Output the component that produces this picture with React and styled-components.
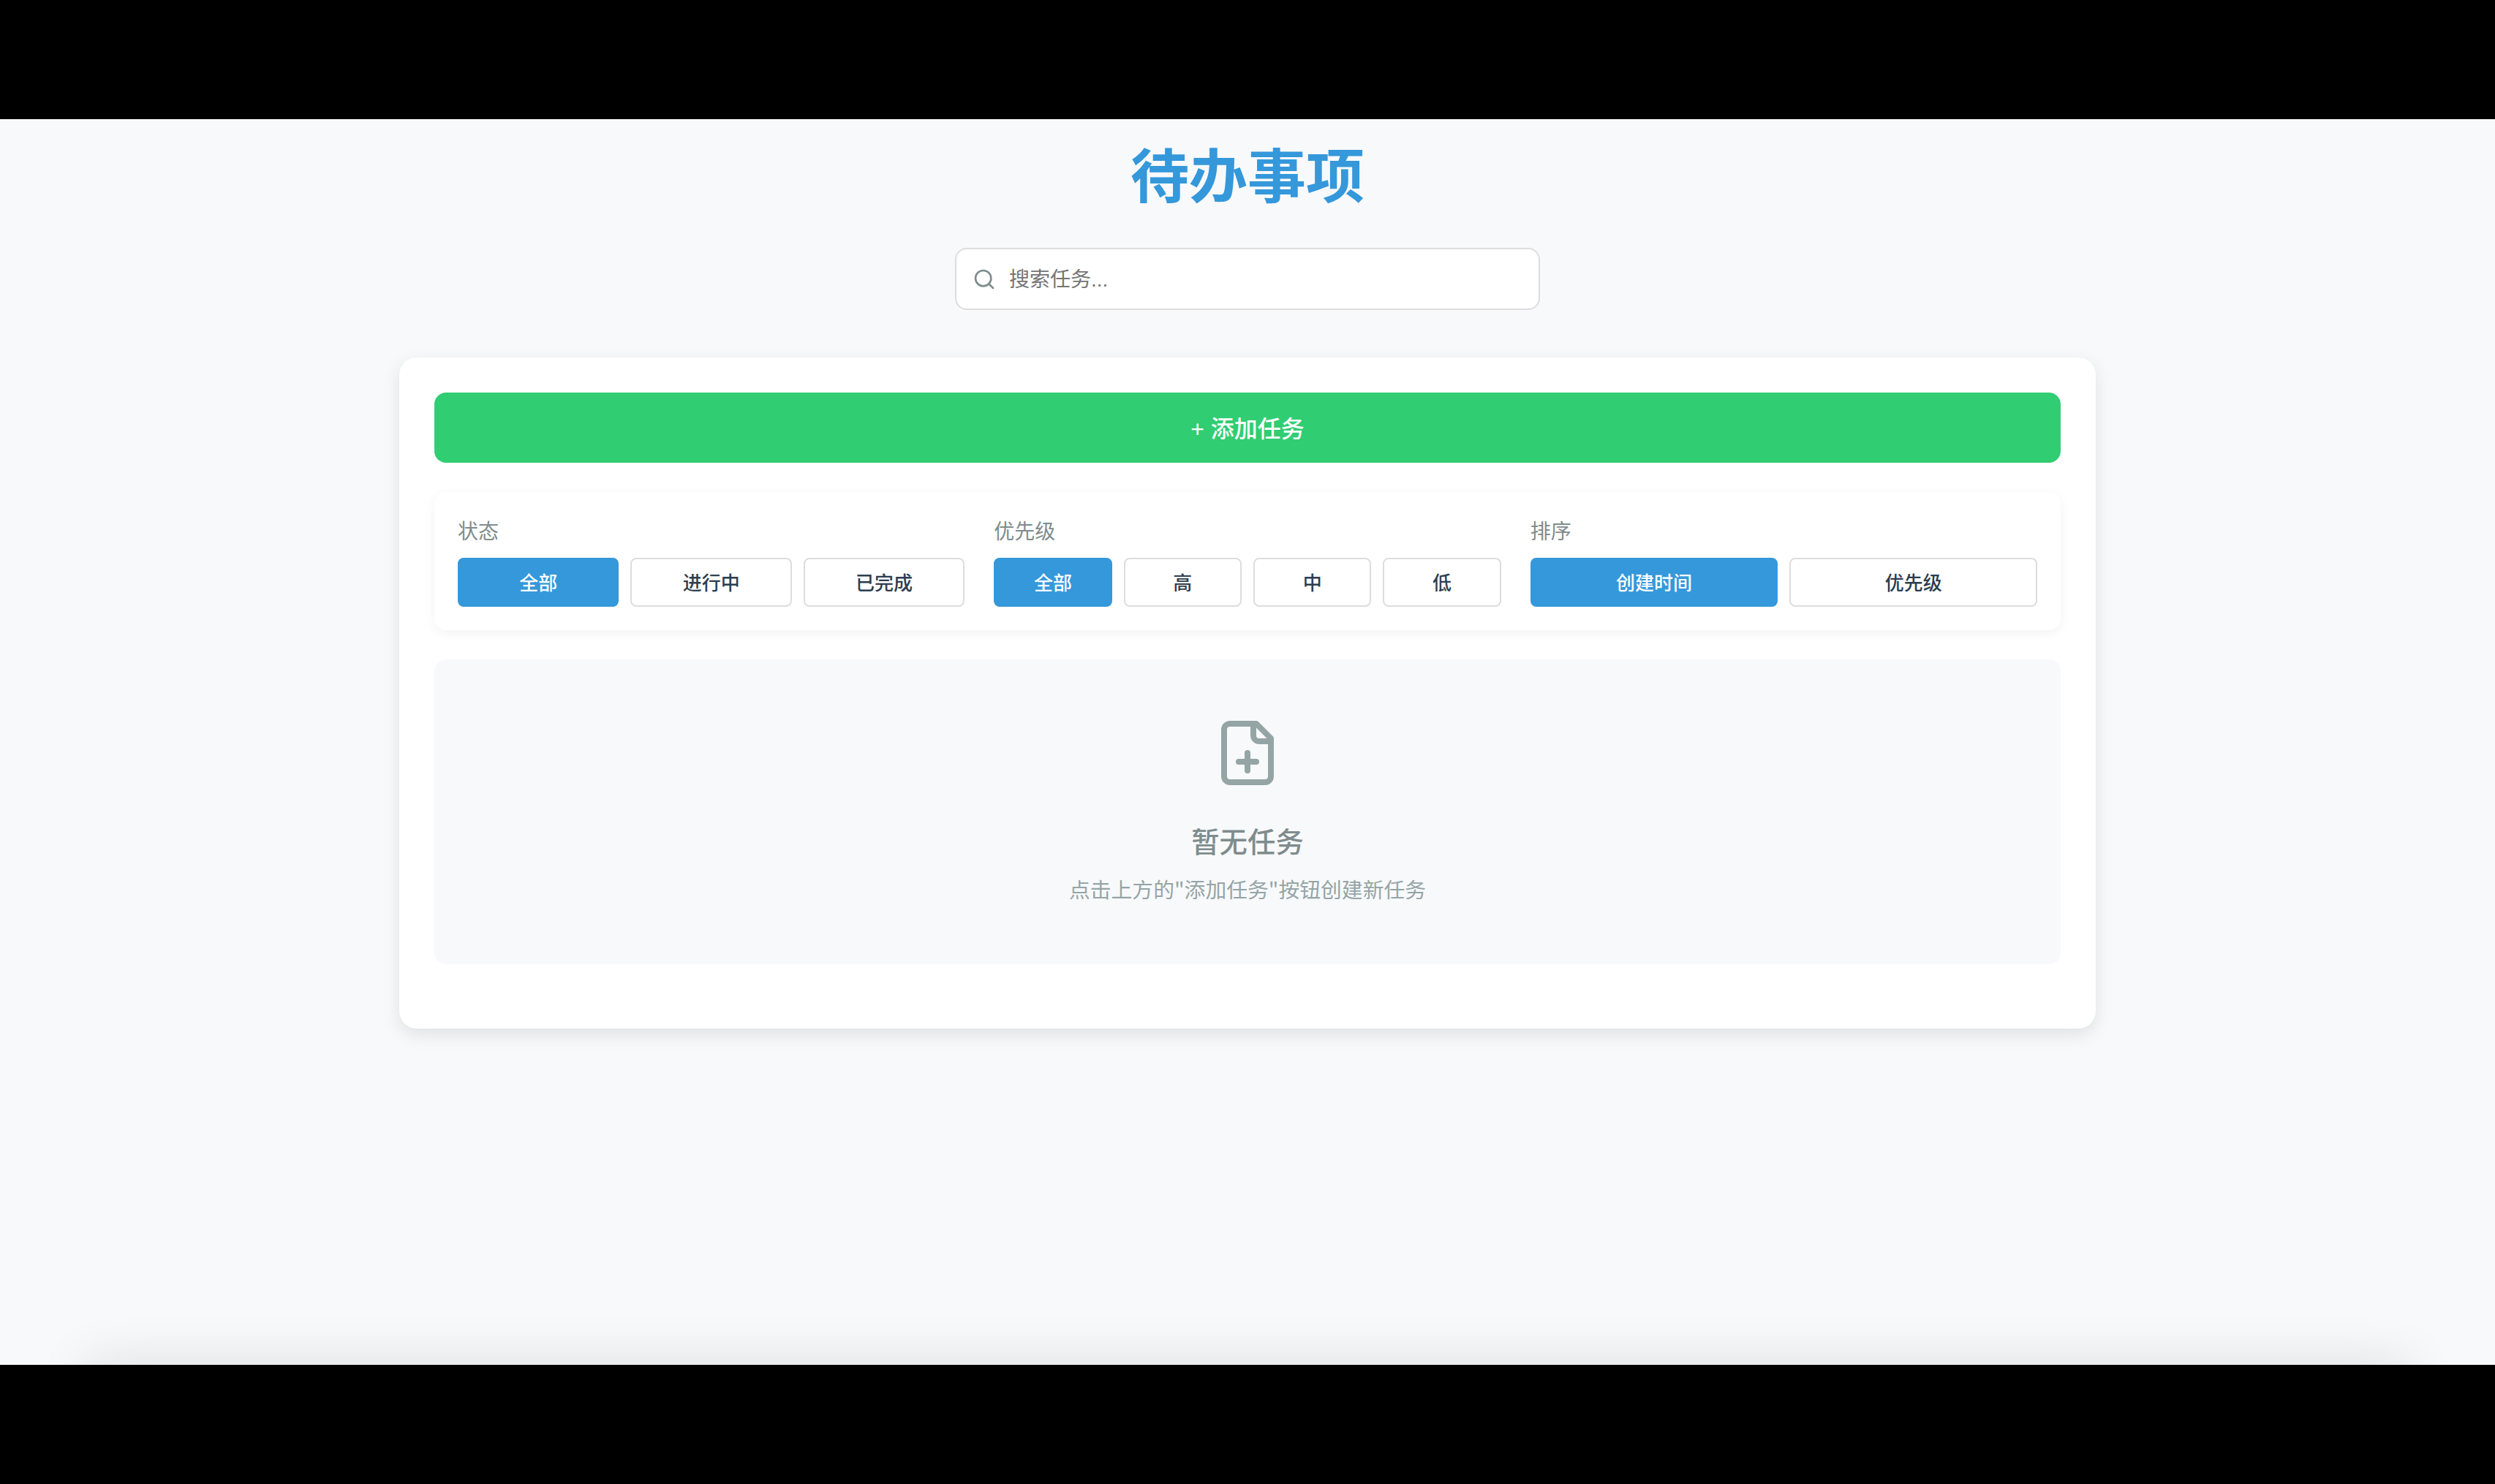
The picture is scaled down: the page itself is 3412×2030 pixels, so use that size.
import React from "react";
import styled, { createGlobalStyle } from "styled-components";

const FONT = `"Liberation Sans", "Noto Sans CJK SC", sans-serif`;

const FILTER_GROUPS = [
  { label: "状态", options: ["全部", "进行中", "已完成"] },
  { label: "优先级", options: ["全部", "高", "中", "低"] },
  { label: "排序", options: ["创建时间", "优先级"] },
];

function App() {
  return (
    <Page>
      <GlobalStyle />
      <BlackBar />
      <Main>
        <Container>
          <Title>待办事项</Title>
          <SearchBox>
            <SearchIcon viewBox="0 0 24 24">
              <path d="m21 21-4.34-4.34" />
              <circle cx="11" cy="11" r="8" />
            </SearchIcon>
            <SearchInput placeholder="搜索任务..." />
          </SearchBox>

          <Card>
            <AddButton type="button">+ 添加任务</AddButton>

            <FilterPanel>
              {FILTER_GROUPS.map((group) => (
                <FilterGroup key={group.label}>
                  <FilterLabel>{group.label}</FilterLabel>
                  <FilterOptions>
                    {group.options.map((option, index) => (
                      <FilterButton key={option} type="button" $active={index === 0}>
                        {option}
                      </FilterButton>
                    ))}
                  </FilterOptions>
                </FilterGroup>
              ))}
            </FilterPanel>

            <EmptyState>
              <EmptyIcon viewBox="0 0 24 24">
                <path d="M15 2H6a2 2 0 0 0-2 2v16a2 2 0 0 0 2 2h12a2 2 0 0 0 2-2V7Z" />
                <path d="M14 2v4a2 2 0 0 0 2 2h4" />
                <path d="M9 15h6" />
                <path d="M12 18v-6" />
              </EmptyIcon>
              <EmptyTitle>暂无任务</EmptyTitle>
              <EmptyText>点击上方的"添加任务"按钮创建新任务</EmptyText>
            </EmptyState>
          </Card>
        </Container>
        <FooterShadow />
      </Main>
      <BlackBar />
    </Page>
  );
}

const GlobalStyle = createGlobalStyle`
  * {
    box-sizing: border-box;
  }

  html,
  body {
    margin: 0;
    padding: 0;
    background: #000;
    font-family: ${FONT};
  }
`;

const Page = styled.div`
  display: flex;
  flex-direction: column;
  height: 2030px;
  overflow: hidden;
`;

const BlackBar = styled.div`
  flex: 0 0 163px;
  background: #000;
`;

const Main = styled.main`
  position: relative;
  flex: 0 0 1704px;
  overflow: hidden;
  background: #f8f9fb;
`;

const Container = styled.div`
  display: flex;
  flex-direction: column;
  align-items: center;
  width: 2320px;
  margin: 0 auto;
  padding-top: 32px;
`;

const Title = styled.h1`
  margin: 0 0 48px;
  color: #3498db;
  font-size: 80px;
  font-weight: 600;
  line-height: 96px;
`;

const SearchBox = styled.div`
  display: flex;
  align-items: center;
  gap: 18px;
  width: 800px;
  height: 85px;
  margin-bottom: 65px;
  padding: 0 22px;
  border: 2px solid #ddd;
  border-radius: 16px;
  background: #fff;
`;

const SearchIcon = styled.svg`
  flex: 0 0 32px;
  width: 32px;
  height: 32px;
  fill: none;
  stroke: #7f8c8d;
  stroke-width: 2;
  stroke-linecap: round;
  stroke-linejoin: round;
`;

const SearchInput = styled.input`
  flex: 1;
  min-width: 0;
  padding: 2px 0 0;
  border: none;
  outline: none;
  background: transparent;
  color: #2c3e50;
  font-family: ${FONT};
  font-size: 28px;

  &::placeholder {
    color: #757575;
  }
`;

const Card = styled.section`
  width: 100%;
  padding: 48px 48px 88px;
  border-radius: 24px;
  background: #fff;
  box-shadow: 0 8px 24px rgba(0, 0, 0, 0.1);
`;

const AddButton = styled.button`
  display: block;
  width: 100%;
  height: 96px;
  margin-bottom: 40px;
  padding: 0 0 2px;
  border: none;
  border-radius: 16px;
  background: #30cd73;
  color: #fff;
  font-family: ${FONT};
  font-size: 32px;
  font-weight: 500;
`;

const FilterPanel = styled.div`
  display: grid;
  grid-template-columns: repeat(3, 1fr);
  gap: 40px;
  margin-bottom: 40px;
  padding: 32px;
  border-radius: 16px;
  background: #fff;
  box-shadow: 0 4px 16px rgba(0, 0, 0, 0.05);
`;

const FilterGroup = styled.div`
  display: flex;
  flex-direction: column;
`;

const FilterLabel = styled.div`
  margin-bottom: 13px;
  padding-top: 1px;
  color: #7f8c8d;
  font-size: 28px;
  line-height: 44px;
`;

const FilterOptions = styled.div`
  display: flex;
  gap: 16px;
`;

const FilterButton = styled.button`
  flex: 1;
  min-width: 0;
  height: 67px;
  padding: 0 0 3px;
  border: 2px solid ${(p) => (p.$active ? "#3498db" : "#ddd")};
  border-radius: 8px;
  background: ${(p) => (p.$active ? "#3498db" : "#fff")};
  color: ${(p) => (p.$active ? "#fff" : "#2c3e50")};
  font-family: ${FONT};
  font-size: 26px;
  font-weight: 500;
`;

const EmptyState = styled.div`
  display: flex;
  flex-direction: column;
  align-items: center;
  padding: 80px 0 80px;
  border-radius: 16px;
  background: #f8f9fb;
`;

const EmptyIcon = styled.svg`
  width: 96px;
  height: 96px;
  margin-bottom: 45px;
  fill: none;
  stroke: #95a5a6;
  stroke-width: 2;
  stroke-linecap: round;
  stroke-linejoin: round;
`;

const EmptyTitle = styled.h3`
  margin: 0 0 10px;
  color: #7f8c8d;
  font-size: 38.4px;
  font-weight: 500;
  line-height: 60px;
`;

const EmptyText = styled.p`
  margin: 0;
  color: #95a5a6;
  font-family: "Noto Sans CJK SC", sans-serif;
  font-size: 28.8px;
  line-height: 46px;
`;

const FooterShadow = styled.div`
  position: absolute;
  top: 100%;
  left: 115px;
  right: 115px;
  height: 40px;
  box-shadow: 0 0 70px rgba(0, 0, 0, 0.14);
`;

export default App;
